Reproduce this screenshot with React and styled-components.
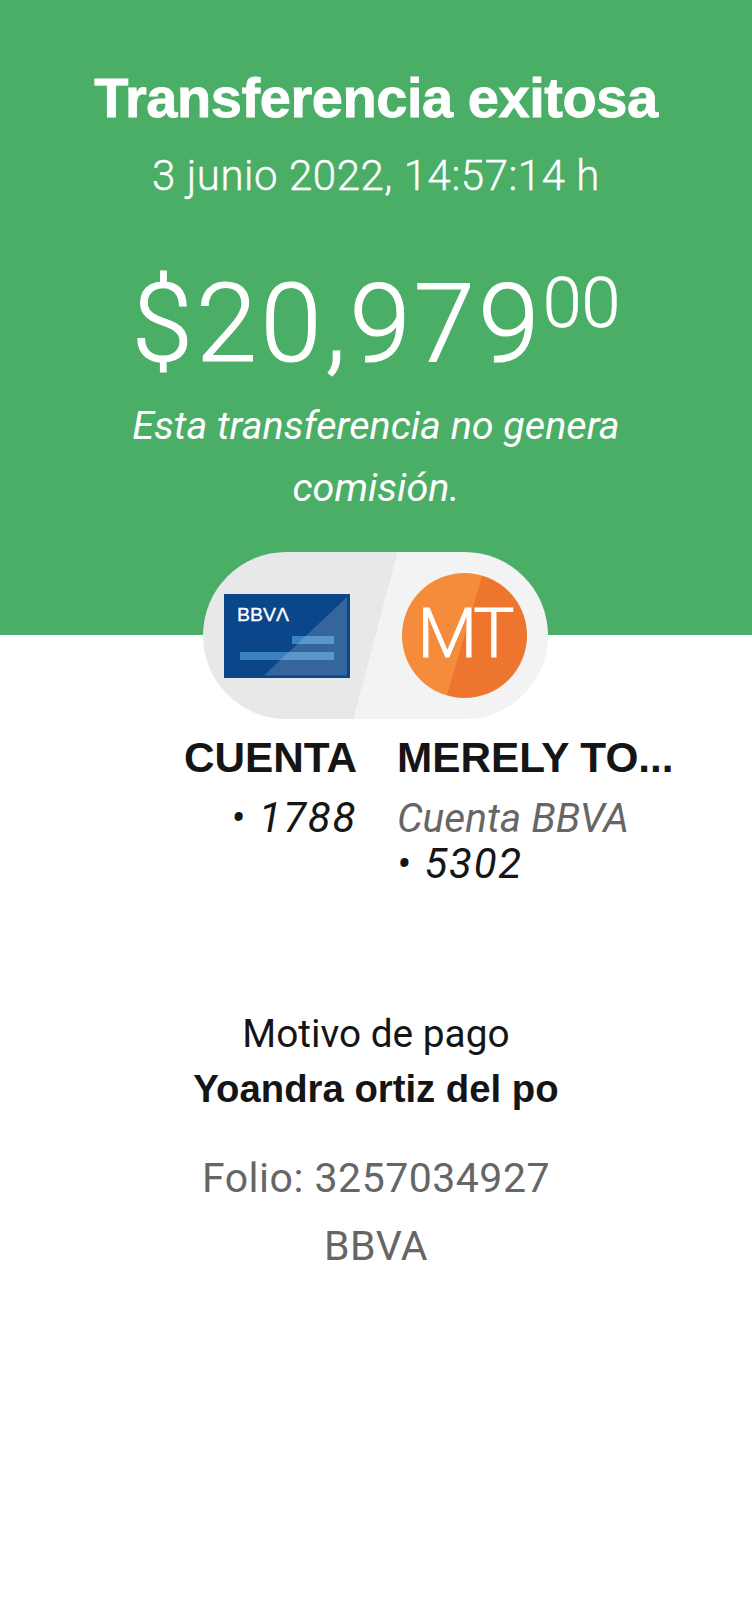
import styled, { createGlobalStyle } from 'styled-components';

const GlobalStyle = createGlobalStyle`
  html, body {
    margin: 0;
    padding: 0;
    background: #fff;
    font-family: 'Liberation Sans', Arial, sans-serif;
  }
`;

const Page = styled.div`
  width: 752px;
  height: 1600px;
  overflow: hidden;
  background: #fff;
`;

const Hero = styled.header`
  height: 635px;
  box-sizing: border-box;
  padding-top: 63px;
  background: #4bae67;
  color: #fff;
  text-align: center;
`;

const Title = styled.h1`
  margin: 0;
  font-size: 56px;
  line-height: 70px;
  font-weight: 700;
  letter-spacing: -0.45px;
  -webkit-text-stroke: 0.8px #fff;
`;

const DateLine = styled.p`
  margin: 19px 0 0;
  font-family: 'Roboto', sans-serif;
  font-size: 42px;
  line-height: 48px;
  font-weight: 300;
  letter-spacing: 0.55px;
  -webkit-text-stroke: 0.4px #fff;
`;

const Amount = styled.div`
  margin-top: 64px;
  font-family: 'Roboto', sans-serif;
  font-size: 110px;
  line-height: 120px;
  font-weight: 300;
  letter-spacing: 3.4px;
  -webkit-text-stroke: 1.2px #fff;
`;

const Cents = styled.sup`
  font-size: 70px;
  line-height: 0;
  letter-spacing: 0;
  vertical-align: 34px;
  -webkit-text-stroke: 0.6px #fff;
`;

const Note = styled.p`
  margin: 11px auto 0;
  width: 560px;
  font-family: 'Roboto', sans-serif;
  font-style: italic;
  font-size: 39.5px;
  line-height: 62px;
  font-weight: 400;
`;

const Pill = styled.div`
  width: 345px;
  height: 167px;
  margin: -83px 0 0 203px;
  border-radius: 84px;
  display: flex;
  overflow: hidden;
  background: linear-gradient(104.8deg, #e8e8e8 0 50%, #f3f3f3 50% 100%);
`;

const PillSide = styled.div`
  flex: 1;
  display: flex;
  align-items: center;
  justify-content: ${(p) => (p.$end ? 'flex-end' : 'flex-start')};
  padding: ${(p) => (p.$end ? '0 21px 0 0' : '0 0 0 21px')};
`;

const Avatar = styled.div`
  width: 125px;
  height: 125px;
  border-radius: 50%;
  overflow: hidden;
  background: linear-gradient(106.5deg, #f58c3c 0 50%, #ee752d 50% 100%);
  color: #fff;
  font-family: 'Roboto', sans-serif;
  font-size: 69px;
  line-height: 121px;
  font-weight: 300;
  letter-spacing: -3px;
  text-align: center;
  -webkit-text-stroke: 1px #fff;
`;

const Accounts = styled.section`
  display: grid;
  grid-template-columns: 357px 1fr;
  column-gap: 40px;
  margin-top: 11px;
`;

const Account = styled.div`
  text-align: ${(p) => (p.$right ? 'right' : 'left')};
`;

const AccountName = styled.div`
  font-size: 42.3px;
  line-height: 56px;
  font-weight: 700;
  color: #151515;
`;

const AccountBank = styled.div`
  font-family: 'Roboto', sans-serif;
  font-style: italic;
  font-size: 40.6px;
  line-height: 46px;
  font-weight: 400;
  margin-top: 9px;
  color: #666;
`;

const AccountNumber = styled.div`
  font-family: 'Roboto', sans-serif;
  font-style: italic;
  font-size: 42px;
  line-height: 46px;
  font-weight: 400;
  letter-spacing: 1.7px;
  color: #151515;
  margin-top: ${(p) => (p.$first ? '9px' : '0')};
`;

const Details = styled.section`
  margin-top: 124px;
  text-align: center;
`;

const Reason = styled.div`
  font-family: 'Roboto', sans-serif;
  font-size: 38.8px;
  line-height: 46px;
  font-weight: 400;
  color: #151515;
`;

const ReasonValue = styled.div`
  margin-top: 9px;
  font-size: 38.3px;
  line-height: 46px;
  font-weight: 700;
  color: #151515;
`;

const Meta = styled.div`
  margin-top: ${(p) => p.$gap}px;
  font-family: 'Roboto', sans-serif;
  font-size: 41px;
  line-height: 46px;
  font-weight: 400;
  letter-spacing: 0.5px;
  color: #666;
`;

const LogoText = styled.text`
  font-family: 'Liberation Sans', sans-serif;
  font-size: 18px;
  fill: #fff;
  stroke: #fff;
  stroke-width: 0.3px;
`;

function BankCard() {
  return (
    <svg width="126" height="84" viewBox="0 0 126 84">
      <rect width="126" height="84" fill="#0b468a" />
      <rect x="68" y="42" width="42" height="8" fill="#3a82c0" />
      <rect x="16" y="58" width="94" height="8" fill="#3a82c0" />
      <path d="M40 81.5 L123 3 V81.5 Z" fill="#fff" fillOpacity="0.17" />
      <LogoText x="13" y="27" textLength="52" lengthAdjust="spacingAndGlyphs">BBVΛ</LogoText>
    </svg>
  );
}

export default function App() {
  return (
    <Page>
      <GlobalStyle />
      <Hero>
        <Title>Transferencia exitosa</Title>
        <DateLine>3 junio 2022, 14:57:14 h</DateLine>
        <Amount>$20,979<Cents>00</Cents></Amount>
        <Note>Esta transferencia no genera comisión.</Note>
      </Hero>
      <Pill>
        <PillSide><BankCard /></PillSide>
        <PillSide $end><Avatar>MT</Avatar></PillSide>
      </Pill>
      <Accounts>
        <Account $right>
          <AccountName>CUENTA</AccountName>
          <AccountNumber $first>• 1788</AccountNumber>
        </Account>
        <Account>
          <AccountName>MERELY TO...</AccountName>
          <AccountBank>Cuenta BBVA</AccountBank>
          <AccountNumber>• 5302</AccountNumber>
        </Account>
      </Accounts>
      <Details>
        <Reason>Motivo de pago</Reason>
        <ReasonValue>Yoandra ortiz del po</ReasonValue>
        <Meta $gap={43}>Folio: 3257034927</Meta>
        <Meta $gap={22}>BBVA</Meta>
      </Details>
    </Page>
  );
}
